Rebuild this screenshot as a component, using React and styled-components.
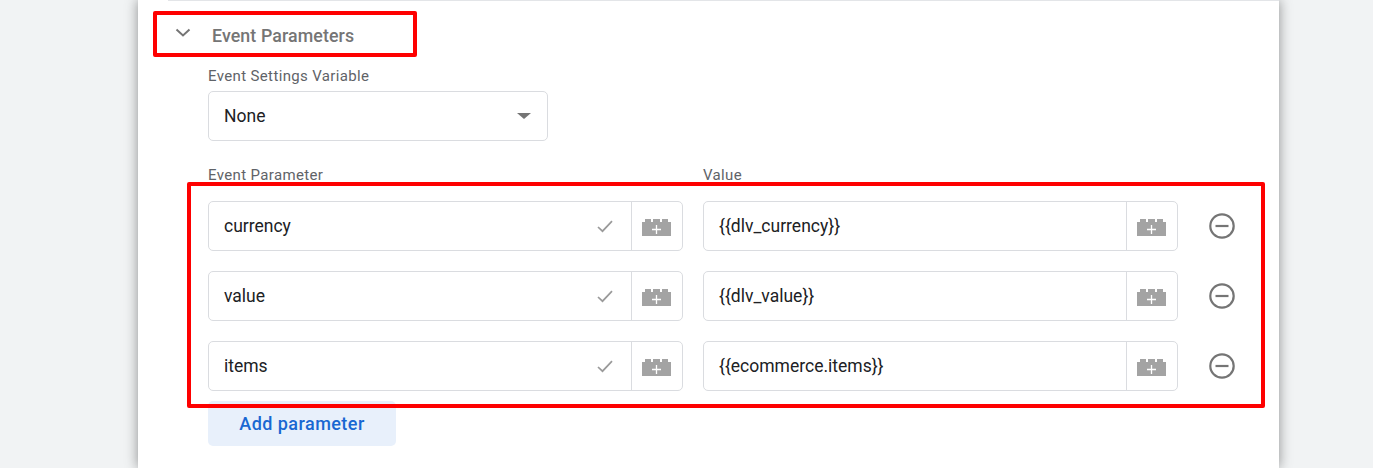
import React from "react";
import styled, { createGlobalStyle } from "styled-components";

const Global = createGlobalStyle`
  html, body { margin: 0; padding: 0; height: 468px; overflow: hidden; background: #f1f3f4; }
  body { font-family: Roboto, "Liberation Sans", sans-serif; }
`;

const Page = styled.div`
  position: relative;
  width: 1373px;
  height: 468px;
  overflow: hidden;
`;

const Card = styled.section`
  width: 1141px;
  height: 468px;
  margin-left: 138px;
  background: #fff;
  box-shadow: 0 0 12px rgba(0, 0, 0, 0.42);
  padding-left: 30px;
  box-sizing: border-box;
`;

const Section = styled.div`
  border-top: 1px solid #e3e5e8;
  height: 100%;
`;

const Header = styled.div`
  display: flex;
  align-items: center;
  height: 69px;
  box-sizing: border-box;
  padding-left: 7px;
  margin-bottom: -2px;
`;

const HeaderRow = styled.div`
  display: flex;
  align-items: center;
  height: 22px;
  margin-top: 1px;
`;

const ChevronIcon = styled.svg`
  width: 16px;
  height: 10px;
  margin-bottom: 6px;
`;

const HeaderTitle = styled.h3`
  margin: 0 0 0 21px;
  font-size: 17.8px;
  font-weight: 500;
  line-height: 22px;
  letter-spacing: 0.1px;
  color: #757575;
`;

const Body = styled.div`
  padding-left: 40px;
  margin-top: -3px;
`;

const Label = styled.label`
  display: block;
  font-size: 15px;
  line-height: 18px;
  letter-spacing: 0.36px;
  color: #5f6368;
`;

const Select = styled.div`
  width: 340px;
  height: 50px;
  margin-top: 6px;
  box-sizing: border-box;
  border: 1px solid #dadce0;
  border-radius: 5px;
  display: flex;
  align-items: center;
  justify-content: space-between;
  padding: 0 16px 0 15px;
  font-size: 17.5px;
  color: #202124;
`;

const Caret = styled.span`
  width: 0;
  height: 0;
  border-left: 7px solid transparent;
  border-right: 7px solid transparent;
  border-top: 6px solid #757575;
`;

const Grid = styled.div`
  display: grid;
  grid-template-columns: 475px 475px 60px;
  column-gap: 20px;
  row-gap: 20px;
  margin-top: 25px;
  align-items: center;
`;

const ColLabel = styled(Label)`
  grid-column: ${(p) => p.$col};
  margin-bottom: -3px;
  height: 18px;
`;

const Field = styled.div`
  height: 50px;
  box-sizing: border-box;
  border: 1px solid #dadce0;
  border-radius: 5px;
  display: flex;
  align-items: stretch;
  font-size: 17.5px;
  color: #202124;
`;

const FieldText = styled.div`
  flex: 1;
  display: flex;
  align-items: center;
  justify-content: space-between;
  padding: 0 18px 0 15px;
`;

const FieldButton = styled.div`
  width: 51px;
  border-left: 1px solid #dadce0;
  display: flex;
  align-items: center;
  justify-content: center;
  padding: 2px 2px 0 0;
  box-sizing: border-box;
`;

const RemoveCell = styled.div`
  display: flex;
  align-items: center;
  padding-left: 11px;
`;

const AddButton = styled.button`
  display: block;
  width: 188px;
  height: 45px;
  margin-top: 10px;
  border: 0;
  border-radius: 5px;
  background: #e8f0fb;
  color: #1967d2;
  font-family: Roboto, "Liberation Sans", sans-serif;
  font-size: 18px;
  font-weight: 500;
  letter-spacing: 0.45px;
  padding: 0;
`;

const RedBox = styled.div`
  position: absolute;
  box-sizing: border-box;
  border: 4px solid #fe0000;
  border-radius: 2px;
  pointer-events: none;
  left: ${(p) => p.$x}px;
  top: ${(p) => p.$y}px;
  width: ${(p) => p.$w}px;
  height: ${(p) => p.$h}px;
`;

const Chevron = () => (
  <ChevronIcon viewBox="0 0 16 10">
    <path d="M1.5 1.5 L8 7.5 L14.5 1.5" fill="none" stroke="#757575" strokeWidth="2" />
  </ChevronIcon>
);

const Check = () => (
  <svg width="16" height="13" viewBox="0 0 16 13">
    <path d="M1 7 L5.5 11.2 L15 1.2" fill="none" stroke="#9a9a9a" strokeWidth="1.7" />
  </svg>
);

const Brick = () => (
  <svg width="29" height="18" viewBox="0 0 29 18">
    <path
      d="M0 4 H3 V1 H9 V4 H11 V1 H18 V4 H20 V1 H26 V4 H29 V18 H0 Z"
      fill="#a3a3a3"
    />
    <path d="M14.5 7 V16 M10 11.5 H19" stroke="#fff" strokeWidth="1.3" />
  </svg>
);

const Minus = () => (
  <svg width="26" height="26" viewBox="0 0 26 26">
    <circle cx="13" cy="13" r="11.7" fill="none" stroke="#757575" strokeWidth="2.2" />
    <path d="M6.5 13 H19.5" stroke="#757575" strokeWidth="2.2" />
  </svg>
);

const rows = [
  ["currency", "{{dlv_currency}}"],
  ["value", "{{dlv_value}}"],
  ["items", "{{ecommerce.items}}"],
];

export default function App() {
  return (
    <Page>
      <Global />
      <Card>
        <Section>
          <Header>
            <HeaderRow>
              <Chevron />
              <HeaderTitle>Event Parameters</HeaderTitle>
            </HeaderRow>
          </Header>
          <Body>
            <Label>Event Settings Variable</Label>
            <Select>
              None
              <Caret />
            </Select>
            <Grid>
              <ColLabel $col={1}>Event Parameter</ColLabel>
              <ColLabel $col={2}>Value</ColLabel>
              <span />
              {rows.map(([name, value]) => (
                <React.Fragment key={name}>
                  <Field>
                    <FieldText>
                      {name}
                      <Check />
                    </FieldText>
                    <FieldButton>
                      <Brick />
                    </FieldButton>
                  </Field>
                  <Field>
                    <FieldText>{value}</FieldText>
                    <FieldButton>
                      <Brick />
                    </FieldButton>
                  </Field>
                  <RemoveCell>
                    <Minus />
                  </RemoveCell>
                </React.Fragment>
              ))}
            </Grid>
            <AddButton>Add parameter</AddButton>
          </Body>
        </Section>
      </Card>
      <RedBox $x={153} $y={11} $w={264} $h={46} />
      <RedBox $x={187} $y={182} $w={1078} $h={226} />
    </Page>
  );
}
